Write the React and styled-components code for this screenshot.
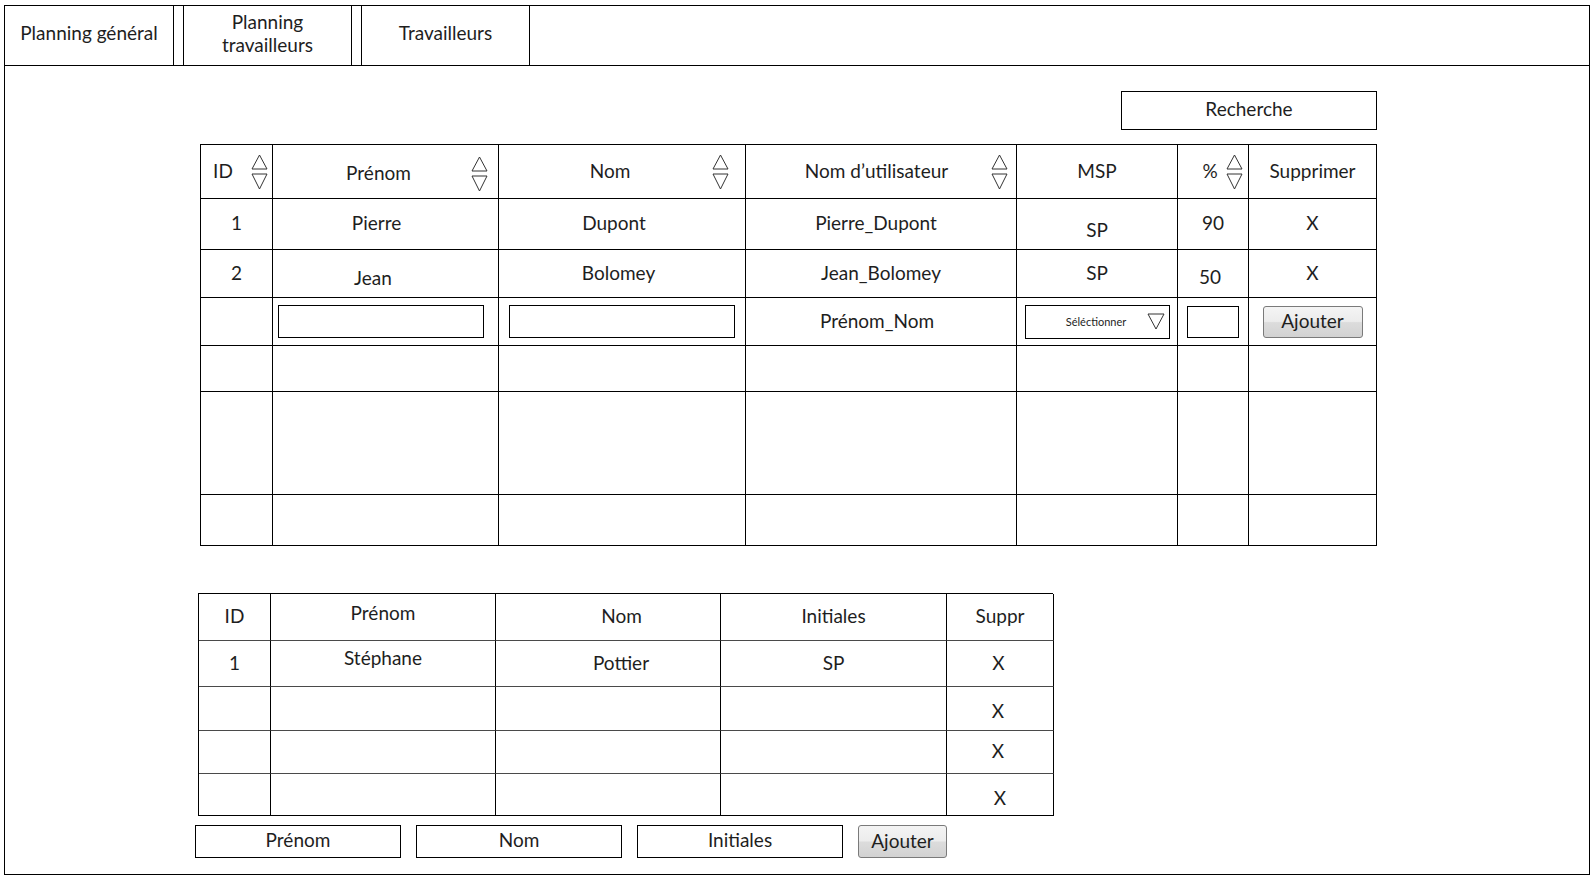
import styled, { createGlobalStyle } from "styled-components";

const GlobalStyle = createGlobalStyle`
  html, body {
    margin: 0;
    padding: 0;
    background: #fff;
  }
  body {
    font-family: Lato, "Open Sans", sans-serif;
    font-size: 19px;
    line-height: 1.2;
    color: #1e1e1e;
  }
`;

const Frame = styled.div`
  box-sizing: border-box;
  width: 1586px;
  height: 870px;
  margin: 5px 0 0 4px;
  border: 1px solid #000;
  display: flex;
  flex-direction: column;
`;

const NavBar = styled.nav`
  box-sizing: border-box;
  display: flex;
  height: 60px;
  border-bottom: 1px solid #000;
`;

const Tab = styled.div`
  box-sizing: border-box;
  width: ${(p) => p.$w}px;
  border-right: 1px solid #000;
  display: flex;
  align-items: center;
  justify-content: center;
  text-align: center;
  line-height: 23px;
  padding-bottom: 6px;
`;

const TabSpacer = styled.div`
  box-sizing: border-box;
  width: 10px;
  border-right: 1px solid #000;
`;

const Content = styled.main`
  display: flex;
  flex-direction: column;
`;

const Section = styled.section`
  margin: ${(p) => p.$mt}px 0 0 ${(p) => p.$ml}px;
  width: ${(p) => p.$w}px;
`;

const SearchRow = styled.div`
  display: flex;
  justify-content: flex-end;
  margin-bottom: 14px;
`;

const SearchBox = styled.div`
  box-sizing: border-box;
  width: 256px;
  height: 39px;
  border: 1px solid #000;
  display: flex;
  align-items: center;
  justify-content: center;
  padding-bottom: 3px;
`;

const Grid = styled.div`
  display: grid;
  grid-template-columns: ${(p) => p.$cols.map((c) => c + "px").join(" ")};
  grid-template-rows: ${(p) => p.$rows.map((r) => r + "px").join(" ")};
  border-top: 1px solid #000;
  border-left: 1px solid #000;
`;

const Cell = styled.div`
  box-sizing: border-box;
  border-right: 1px solid #000;
  border-bottom: 1px solid ${(p) => (p.$soft ? "#4a4a4a" : "#000")};
  display: flex;
  align-items: center;
  justify-content: ${(p) => p.$justify || "center"};
  padding: ${(p) => p.$pt || 0}px ${(p) => p.$pr || 0}px
    ${(p) => (p.$pb || 0) + 1}px ${(p) => p.$pl || 0}px;
  white-space: nowrap;
`;

const HeadLabel = styled.span`
  flex: 1;
  text-align: center;
  padding: 0 ${(p) => p.$pr || 0}px 0 ${(p) => p.$pl || 0}px;
`;

const SortIcon = styled.svg`
  flex: none;
  margin-right: ${(p) => p.$mr}px;
  margin-top: 1px;
`;

const TextField = styled.div`
  box-sizing: border-box;
  width: ${(p) => p.$w}px;
  height: ${(p) => p.$h || 33}px;
  border: 1px solid #000;
  display: flex;
  align-items: center;
  justify-content: center;
  padding-bottom: 3px;
  background: #fff;
`;

const SelectBox = styled.div`
  box-sizing: border-box;
  width: 145px;
  height: 34px;
  margin-top: 1px;
  border: 1px solid #000;
  display: flex;
  align-items: center;
  font-size: 11px;
`;

const SelectLabel = styled.span`
  flex: 1;
  text-align: center;
  padding-left: 20px;
`;

const AddButton = styled.button`
  box-sizing: border-box;
  width: ${(p) => p.$w}px;
  height: ${(p) => p.$h}px;
  border: 1px solid #7a7a7a;
  border-radius: 3px;
  background: linear-gradient(#f4f4f4 0%, #ececec 48%, #dcdcdc 52%, #d2d2d2 100%);
  font-family: inherit;
  font-size: 19px;
  line-height: 1;
  color: #1e1e1e;
  padding: 0 0 3px;
`;

const BottomRow = styled.div`
  display: flex;
  align-items: center;
  gap: 15px;
  margin: 9px 0 0 -3px;
`;

function SortArrows({ mr }) {
  return (
    <SortIcon $mr={mr} width="17" height="36" viewBox="0 0 17 36">
      <path d="M8.5 1 L1 15 H16 Z" fill="none" stroke="#333" strokeWidth="1" />
      <path d="M1 20 H16 L8.5 35 Z" fill="none" stroke="#333" strokeWidth="1" />
    </SortIcon>
  );
}

function SelectArrow() {
  return (
    <svg width="18" height="17" viewBox="0 0 18 17" style={{ marginRight: 4 }}>
      <path d="M1 1 H17 L9 16 Z" fill="none" stroke="#333" strokeWidth="1" />
    </svg>
  );
}

const workerCols = [72, 226, 247, 271, 161, 71, 128];
const workerRows = [54, 51, 48, 48, 46, 103, 51];

const msCols = [72, 225, 225, 226, 107];
const msRows = [47, 46, 44, 43, 42];

export default function App() {
  return (
    <>
      <GlobalStyle />
      <Frame>
        <NavBar>
          <Tab $w={169}>Planning général</Tab>
          <TabSpacer />
          <Tab $w={168}>
            Planning
            <br />
            travailleurs
          </Tab>
          <TabSpacer />
          <Tab $w={168}>Travailleurs</Tab>
        </NavBar>

        <Content>
          <Section $mt={25} $ml={195} $w={1177}>
            <SearchRow>
              <SearchBox>Recherche</SearchBox>
            </SearchRow>

            <Grid $cols={workerCols} $rows={workerRows}>
              {/* header */}
              <Cell>
                <HeadLabel $pr={6}>ID</HeadLabel>
                <SortArrows mr={4} />
              </Cell>
              <Cell $pt={4}>
                <HeadLabel $pl={13}>Prénom</HeadLabel>
                <SortArrows mr={10} />
              </Cell>
              <Cell>
                <HeadLabel $pl={9}>Nom</HeadLabel>
                <SortArrows mr={16} />
              </Cell>
              <Cell>
                <HeadLabel $pl={16}>Nom d’utilisateur</HeadLabel>
                <SortArrows mr={8} />
              </Cell>
              <Cell>MSP</Cell>
              <Cell>
                <HeadLabel $pl={16}>%</HeadLabel>
                <SortArrows mr={5} />
              </Cell>
              <Cell>Supprimer</Cell>

              {/* Pierre */}
              <Cell>1</Cell>
              <Cell $pr={18}>Pierre</Cell>
              <Cell $pr={16}>Dupont</Cell>
              <Cell $pr={10}>Pierre_Dupont</Cell>
              <Cell $pt={14}>SP</Cell>
              <Cell>90</Cell>
              <Cell>X</Cell>

              {/* Jean */}
              <Cell>2</Cell>
              <Cell $pt={11} $pr={25}>Jean</Cell>
              <Cell $pr={7}>Bolomey</Cell>
              <Cell>Jean_Bolomey</Cell>
              <Cell>SP</Cell>
              <Cell $pt={9} $pr={6}>50</Cell>
              <Cell>X</Cell>

              {/* new worker */}
              <Cell />
              <Cell $justify="flex-start" $pl={5} $pt={1}>
                <TextField $w={206} />
              </Cell>
              <Cell $pt={1}>
                <TextField $w={226} />
              </Cell>
              <Cell $pr={8}>Prénom_Nom</Cell>
              <Cell>
                <SelectBox>
                  <SelectLabel>Séléctionner</SelectLabel>
                  <SelectArrow />
                </SelectBox>
              </Cell>
              <Cell $pt={1}>
                <TextField $w={52} $h={32} />
              </Cell>
              <Cell $pt={2}>
                <AddButton $w={100} $h={32}>Ajouter</AddButton>
              </Cell>

              {[0, 1, 2].map((r) =>
                workerCols.map((_, c) => <Cell key={`${r}-${c}`} />)
              )}
            </Grid>
          </Section>

          <Section $mt={47} $ml={193} $w={855}>
            <Grid $cols={msCols} $rows={msRows}>
              <Cell $soft>ID</Cell>
              <Cell $soft $pb={6}>Prénom</Cell>
              <Cell $soft $pl={27}>Nom</Cell>
              <Cell $soft>Initiales</Cell>
              <Cell $soft>Suppr</Cell>

              <Cell $soft>1</Cell>
              <Cell $soft $pb={9}>Stéphane</Cell>
              <Cell $soft $pl={26}>Pottier</Cell>
              <Cell $soft>SP</Cell>
              <Cell $soft $pr={3}>X</Cell>

              <Cell $soft />
              <Cell $soft />
              <Cell $soft />
              <Cell $soft />
              <Cell $soft $pt={7} $pr={4}>X</Cell>

              <Cell $soft />
              <Cell $soft />
              <Cell $soft />
              <Cell $soft />
              <Cell $soft $pr={4}>X</Cell>

              <Cell />
              <Cell />
              <Cell />
              <Cell />
              <Cell $pt={8}>X</Cell>
            </Grid>

            <BottomRow>
              <TextField $w={206} $h={33}>Prénom</TextField>
              <TextField $w={206} $h={33}>Nom</TextField>
              <TextField $w={206} $h={33}>Initiales</TextField>
              <AddButton $w={89} $h={33}>Ajouter</AddButton>
            </BottomRow>
          </Section>
        </Content>
      </Frame>
    </>
  );
}
